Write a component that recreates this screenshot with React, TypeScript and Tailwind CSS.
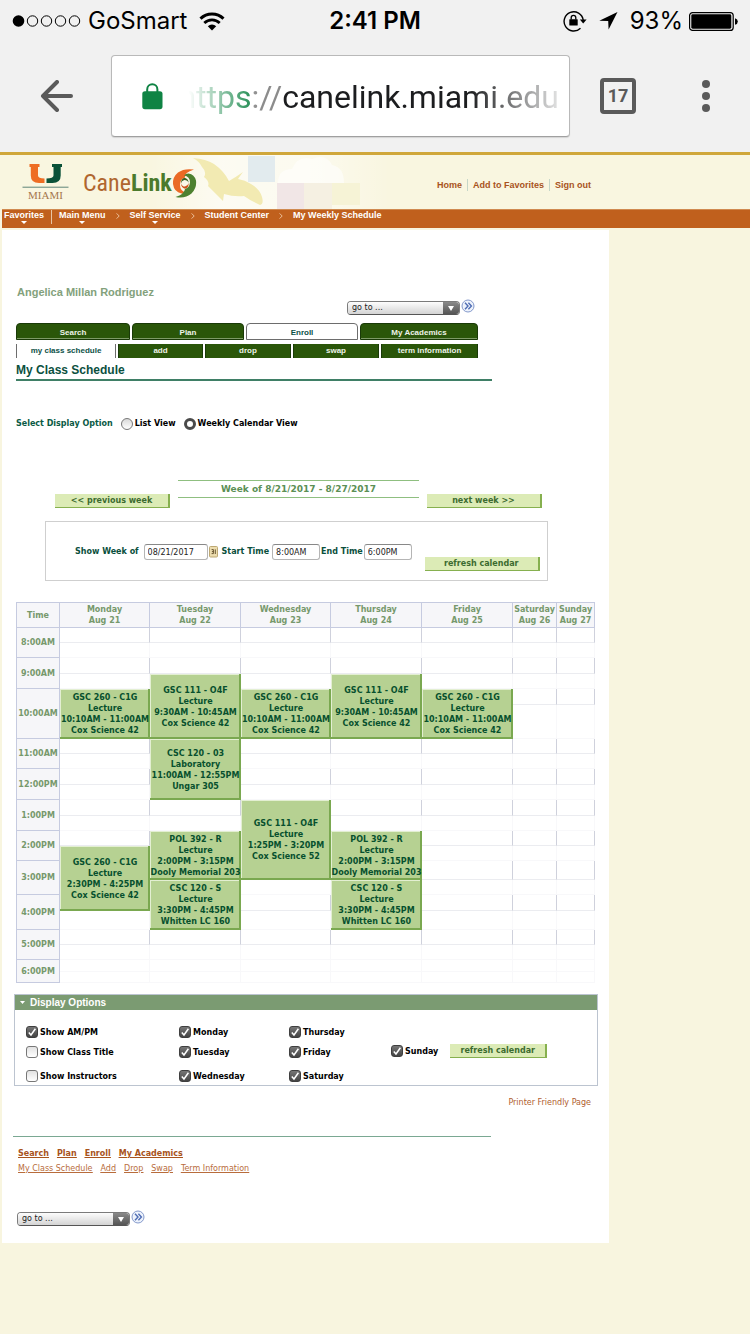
import React from "react";

const verdana = "font-['DejaVu_Sans',Verdana,sans-serif]";
const arial = "font-['Liberation_Sans',Arial,sans-serif]";

type Row = { hour?: string; h: string };

const rows: Row[] = [
  { hour: "8:00AM", h: "h-[15px]" },
  { h: "h-[15px]" },
  { hour: "9:00AM", h: "h-[16px]" },
  { h: "h-[15px]" },
  { hour: "10:00AM", h: "h-[16px]" },
  { h: "h-[34px]" },
  { hour: "11:00AM", h: "h-[15px]" },
  { h: "h-[15px]" },
  { hour: "12:00PM", h: "h-[16px]" },
  { h: "h-[15px]" },
  { hour: "1:00PM", h: "h-[16px]" },
  { h: "h-[15px]" },
  { hour: "2:00PM", h: "h-[15px]" },
  { h: "h-[15px]" },
  { hour: "3:00PM", h: "h-[19px]" },
  { h: "h-[15px]" },
  { hour: "4:00PM", h: "h-[16px]" },
  { h: "h-[19px]" },
  { hour: "5:00PM", h: "h-[15px]" },
  { h: "h-[15px]" },
  { hour: "6:00PM", h: "h-[12px]" },
  { h: "h-[11px]" },
];

const days = [
  ["Monday", "Aug 21"],
  ["Tuesday", "Aug 22"],
  ["Wednesday", "Aug 23"],
  ["Thursday", "Aug 24"],
  ["Friday", "Aug 25"],
  ["Saturday", "Aug 26"],
  ["Sunday", "Aug 27"],
];

type Meeting = { day: number; start: number; span: number; lines: string[] };

const meetings: Meeting[] = [
  { day: 0, start: 4, span: 2, lines: ["GSC 260 - C1G", "Lecture", "10:10AM - 11:00AM", "Cox Science 42"] },
  { day: 0, start: 13, span: 4, lines: ["GSC 260 - C1G", "Lecture", "2:30PM - 4:25PM", "Cox Science 42"] },
  { day: 1, start: 3, span: 3, lines: ["GSC 111 - O4F", "Lecture", "9:30AM - 10:45AM", "Cox Science 42"] },
  { day: 1, start: 6, span: 4, lines: ["CSC 120 - 03", "Laboratory", "11:00AM - 12:55PM", "Ungar 305"] },
  { day: 1, start: 12, span: 3, lines: ["POL 392 - R", "Lecture", "2:00PM - 3:15PM", "Dooly Memorial 203"] },
  { day: 1, start: 15, span: 3, lines: ["CSC 120 - S", "Lecture", "3:30PM - 4:45PM", "Whitten LC 160"] },
  { day: 2, start: 4, span: 2, lines: ["GSC 260 - C1G", "Lecture", "10:10AM - 11:00AM", "Cox Science 42"] },
  { day: 2, start: 10, span: 5, lines: ["GSC 111 - O4F", "Lecture", "1:25PM - 3:20PM", "Cox Science 52"] },
  { day: 3, start: 3, span: 3, lines: ["GSC 111 - O4F", "Lecture", "9:30AM - 10:45AM", "Cox Science 42"] },
  { day: 3, start: 12, span: 3, lines: ["POL 392 - R", "Lecture", "2:00PM - 3:15PM", "Dooly Memorial 203"] },
  { day: 3, start: 15, span: 3, lines: ["CSC 120 - S", "Lecture", "3:30PM - 4:45PM", "Whitten LC 160"] },
  { day: 4, start: 4, span: 2, lines: ["GSC 260 - C1G", "Lecture", "10:10AM - 11:00AM", "Cox Science 42"] },
];

function StatusBar() {
  return (
    <div className="grid h-10 grid-cols-[1fr_auto_1fr] items-center pl-3 pr-3 pt-0.5 font-['Inter',sans-serif] text-2xl text-black">
      <div className="flex items-center">
        <svg width="70" height="14" viewBox="0 0 70 14" aria-hidden="true">
          <circle cx="6.5" cy="7" r="5.8" />
          {[20.5, 34.5, 48.5, 62.5].map((x) => (
            <circle key={x} cx={x} cy="7" r="5.2" fill="none" stroke="#000" strokeWidth="1" />
          ))}
        </svg>
        <span className="ml-1.5">GoSmart</span>
        <svg className="ml-3" width="26" height="19" viewBox="0 0 26 19" aria-hidden="true">
          <path d="M1.5 6.7 A16.5 16.5 0 0 1 24.5 6.7" fill="none" stroke="#000" strokeWidth="3" />
          <path d="M5.3 11 A11 11 0 0 1 20.7 11" fill="none" stroke="#000" strokeWidth="2.8" />
          <path d="M13 18.5 L8.8 14.2 A6.2 6.2 0 0 1 17.2 14.2 Z" />
        </svg>
      </div>
      <div className="font-semibold">2:41 PM</div>
      <div className="flex items-center justify-end">
        <svg width="24" height="22" viewBox="0 0 24 22" aria-hidden="true">
          <path d="M17.5 18.2 A9.6 9.6 0 1 1 20.2 10" fill="none" stroke="#000" strokeWidth="1.4" />
          <path d="M16.8 9.6 H23.6 L20.2 13.4 Z" />
          <rect x="6.3" y="9.2" width="8.4" height="6.4" rx="0.6" />
          <path d="M8.2 9.5 V7.6 A2.3 2.3 0 0 1 12.8 7.6 V9.5" fill="none" stroke="#000" strokeWidth="1.3" />
        </svg>
        <svg className="ml-3" width="19" height="18" viewBox="0 0 19 18" aria-hidden="true">
          <path d="M18.5 0 L9.6 17.6 L9.2 9.1 L0.3 8.8 Z" />
        </svg>
        <span className="ml-3">93%</span>
        <svg className="ml-1.5" width="49" height="19" viewBox="0 0 49 19" aria-hidden="true">
          <rect x="0.6" y="0.6" width="43.6" height="17.8" rx="3" fill="none" stroke="#000" strokeWidth="1.2" />
          <rect x="2.3" y="2.3" width="40" height="14.4" rx="1.4" />
          <path d="M46 6.2 Q48.8 7 48.8 9.5 Q48.8 12 46 12.8 Z" />
        </svg>
      </div>
    </div>
  );
}

function BrowserBar() {
  return (
    <div className="flex items-center pb-[15px] pl-10 pr-10 pt-[15px]">
      <button type="button" aria-label="Back" className="shrink-0">
        <svg width="33" height="32" viewBox="0 0 33 32" fill="none" stroke="#5a5a5a" strokeWidth="4" strokeLinecap="round" strokeLinejoin="round">
          <path d="M31 16 H3 M17 2 L3 16 L17 30" />
        </svg>
      </button>
      <button
        type="button"
        className="ml-[38px] flex h-[82px] min-w-0 flex-1 items-center rounded border border-[#b9b9b9] border-b-[#a0a0a0] bg-white pl-[30px] pr-[10px] shadow-[0_1px_1px_rgba(0,0,0,0.12)]"
      >
        <svg className="shrink-0" width="21" height="27" viewBox="0 0 21 27" aria-hidden="true">
          <rect x="0.3" y="8.2" width="20.2" height="18" rx="2.6" fill="#0f8344" />
          <path d="M5.2 9 V6.4 A5.1 5.1 0 0 1 15.4 6.4 V9" fill="none" stroke="#0f8344" strokeWidth="2" />
        </svg>
        <span className="ml-1.5 flex min-w-0 flex-1 justify-end whitespace-nowrap pt-0.5 font-['Roboto',sans-serif] text-[32px] leading-[44px] text-[#1c1d1f] [mask-image:linear-gradient(to_right,transparent_5%,black_23%,black_77%,rgba(0,0,0,0.12))]">
          <span>
            <span className="text-[#0f8344]">https</span>
            <span className="text-[#8c8c8c]">://</span>canelink.miami.edu
          </span>
        </span>
      </button>
      <button
        type="button"
        aria-label="17 open tabs"
        className="ml-[30px] flex h-9 w-9 shrink-0 items-center justify-center rounded border-4 border-[#5a5a5a] font-['Roboto',sans-serif] text-lg font-bold text-[#5a5a5a]"
      >
        17
      </button>
      <button type="button" aria-label="Menu" className="ml-[66px] flex shrink-0 flex-col gap-1">
        <span className="h-2 w-2 rounded-full bg-[#5a5a5a]" />
        <span className="h-2 w-2 rounded-full bg-[#5a5a5a]" />
        <span className="h-2 w-2 rounded-full bg-[#5a5a5a]" />
      </button>
    </div>
  );
}

function HeaderArt() {
  return (
    <svg className="absolute left-[150px] top-0" width="240" height="54" viewBox="0 0 240 54" aria-hidden="true">
      <defs>
        <linearGradient id="sky" x1="0" x2="1">
          <stop offset="0" stopColor="#fff" stopOpacity="0" />
          <stop offset="0.3" stopColor="#fff" stopOpacity="0.6" />
          <stop offset="0.65" stopColor="#fff" stopOpacity="0.5" />
          <stop offset="1" stopColor="#fff" stopOpacity="0" />
        </linearGradient>
      </defs>
      <rect width="240" height="54" fill="url(#sky)" />
      <rect x="98" y="1" width="27" height="26" fill="#e2ebee" />
      <rect x="127" y="28" width="27" height="26" fill="#f1e6e6" />
      <rect x="154" y="28" width="28" height="26" fill="#f5f0e2" />
      <rect x="182" y="28" width="28" height="22" fill="#f6f3d6" />
      <path d="M128 28 Q128 14 142 14 Q148 0 162 4 Q176 -2 182 10 Q194 12 194 28 Z" fill="#fff" fillOpacity="0.55" />
      <path d="M43 3 Q56 4 64 9 Q74 16 79 26 Q86 22 93 17 Q90 21 88 24 Q95 25 101 29 Q110 34 112 42 Q114 49 110 50 Q101 46 94 41 Q84 42 74 39 L73 46 Q65 38 58 31 Q60 27 54 22 Q57 17 52 12 Q49 6 43 3 Z" fill="#f2eab2" />
    </svg>
  );
}

function Header() {
  return (
    <header className={`relative border-t-[3px] border-[#d0a73a] bg-[#f9f6e0] ${arial}`}>
      <HeaderArt />
      <div className="relative flex h-[54px] items-start pl-[22px]">
        <a href="#miami" className="flex w-[47px] flex-col items-center pt-[9px]">
          <svg width="47" height="24" viewBox="0 0 47 24" aria-hidden="true">
            <path d="M7.5 0 H17.5 V3 H16 V11.5 Q16 14.5 22.5 14.5 V19 H17 Q8.8 19 8.8 11.5 V3 H7.5 Z" fill="#ee6d23" />
            <path d="M40 0 H30 V3 H31.5 V11.5 Q31.5 14.5 24.5 14.5 V19 H30.5 Q38.7 19 38.7 11.5 V3 H40 Z" fill="#0b5238" />
            <path d="M0.5 23.2 H46.5" stroke="#5f8577" strokeWidth="1" />
          </svg>
          <span className="font-['Liberation_Serif',serif] text-[11px] leading-[14px] text-[#a5764d]">MIAMI</span>
        </a>
        <a href="#canelink" className="ml-[14px] flex items-center pt-[12px] font-['Roboto_Condensed','Liberation_Sans_Narrow','Roboto',sans-serif] leading-[32px]">
          <span className="text-2xl text-[#b0662f]">Cane</span>
          <span className="text-2xl font-bold text-[#4b7a2c]">Link</span>
          <svg width="25" height="30" viewBox="0 0 25 30" aria-hidden="true">
            <path d="M22 1.5 Q12 0 6 4.5 Q0.5 9 1 16 Q2 24 9.5 25.5 Q12 26 14 24.5 Q8 23 8 17 Q8 11 13 9.5 Q12 4.5 22 1.5 Z" fill="#ea6a26" />
            <path d="M3.5 29 Q13 31 19.5 25.5 Q25 20 24 12.5 Q22.5 6.5 16.5 5.5 Q13.5 5.5 12 7.5 Q18 8.5 18 14.5 Q17.5 19.5 13 21 Q12.5 26 3.5 29 Z" fill="#4d8130" />
            <path d="M12.5 9.8 Q16.6 10.6 16.6 15 Q15.8 12 12.3 12 Q9.4 12.6 9 15.5 Q8.8 11 12.5 9.8 Z" fill="#3a6424" />
            <path d="M13 20.8 Q9 19.6 9 15.5 Q10 18.6 13 18.6 Q16 18 16.6 15 Q17 19.4 13 20.8 Z" fill="#cf541c" />
          </svg>
        </a>
        <nav className="absolute left-[437px] top-[24px] flex items-center gap-[5px] whitespace-nowrap text-[9px] font-bold leading-[12px] text-[#a8531c]">
          <a href="#home">Home</a>
          <span className="h-3 w-px bg-[#c5d6c8]" />
          <a href="#add-favorite">Add to Favorites</a>
          <span className="h-3 w-px bg-[#c5d6c8]" />
          <a href="#signout">Sign out</a>
        </nav>
      </div>
    </header>
  );
}

function Crumb({ label, menu }: { label: string; menu?: boolean }) {
  return (
    <a href="#crumb" className="flex flex-col items-center">
      {label}
      {menu && (
        <svg width="6" height="3" viewBox="0 0 6 3" aria-hidden="true">
          <path d="M0 0 H6 L3 3 Z" fill="#fff" />
        </svg>
      )}
    </a>
  );
}

function CrumbArrow() {
  return (
    <svg className="mt-[3px]" width="4" height="6" viewBox="0 0 4 6" aria-hidden="true">
      <path d="M0.6 0.4 L3.2 3 L0.6 5.6" fill="none" stroke="#f0c9a8" strokeWidth="0.9" />
    </svg>
  );
}

function NavBar() {
  return (
    <nav
      className={`ml-0.5 flex h-[19px] items-start gap-[10px] whitespace-nowrap border-t border-[#d08a50] bg-[#c0601d] pl-0.5 text-[9px] font-bold leading-[11px] text-white ${arial}`}
    >
      <div className="flex gap-[7px]">
        <Crumb label="Favorites" menu />
        <span className="h-[14px] w-px bg-[#e8c5a5]" />
        <Crumb label="Main Menu" menu />
      </div>
      <CrumbArrow />
      <Crumb label="Self Service" menu />
      <CrumbArrow />
      <Crumb label="Student Center" />
      <CrumbArrow />
      <Crumb label="My Weekly Schedule" />
    </nav>
  );
}

function GoTo({ id }: { id: string }) {
  return (
    <div className="flex items-start gap-px">
      <div className="relative mt-0.5 h-[14px] w-[113px] overflow-hidden rounded border border-[#7b7b7b] border-b-[#555]">
        <select
          id={id}
          aria-label="Go to"
          className={`block h-full w-full appearance-none bg-linear-to-b from-[#fdfdfd] to-[#d4d4d4] pl-1 text-[8px] leading-[12px] text-[#222] ${verdana}`}
        >
          <option>go to ...</option>
        </select>
        <span className="pointer-events-none absolute inset-y-0 right-0 flex w-4 items-center justify-center bg-linear-to-b from-[#8a8a8a] to-[#555]">
          <svg width="6" height="5" viewBox="0 0 6 5" aria-hidden="true">
            <path d="M0 0 H6 L3 5 Z" fill="#fff" />
          </svg>
        </span>
      </div>
      <button type="button" aria-label="Go">
        <svg width="14" height="14" viewBox="0 0 14 14" fill="none">
          <circle cx="7" cy="7" r="6" fill="#eef3fc" stroke="#8499cb" strokeWidth="1" />
          <path d="M4 3.8 L7 7 L4 10.2 M7.4 3.8 L10.4 7 L7.4 10.2" stroke="#4f6db4" strokeWidth="1.4" />
        </svg>
      </button>
    </div>
  );
}

const mainTabs = [
  { label: "Search", w: "w-[114px]" },
  { label: "Plan", w: "w-[112px]" },
  { label: "Enroll", w: "w-[112px]", active: true },
  { label: "My Academics", w: "w-[118px]" },
];

const subTabs = [
  { label: "my class schedule", w: "w-[100px]", active: true },
  { label: "add", w: "w-[85px]" },
  { label: "drop", w: "w-[86px]" },
  { label: "swap", w: "w-[86px]" },
  { label: "term information", w: "w-[97px]" },
];

function Tabs() {
  return (
    <div className={`ml-[14px] text-[8px] font-bold ${arial}`}>
      <div className="mt-2 flex gap-0.5">
        {mainTabs.map((t) => (
          <a
            key={t.label}
            href="#tab"
            className={`flex h-[17px] items-center justify-center rounded-t border pt-0.5 ${t.w} ${
              t.active
                ? "border-[#6d6d6d] bg-white text-[#0d5147]"
                : "border-[#1a3a08] bg-[#2a5609] text-[#eef3e8] shadow-[inset_0_-2px_0_-1px_#7d9a66]"
            }`}
          >
            {t.label}
          </a>
        ))}
      </div>
      <div className="mt-1 flex gap-0.5">
        {subTabs.map((t) => (
          <a
            key={t.label}
            href="#subtab"
            className={`flex h-[14px] items-center justify-center border-x ${t.w} ${
              t.active ? "border-[#6d6d6d] bg-white text-[#0d5147]" : "border-[#1a3a08] bg-[#2a5609] text-[#eef3e8]"
            }`}
          >
            {t.label}
          </a>
        ))}
      </div>
    </div>
  );
}

function Radio({ id, label, checked }: { id: string; label: string; checked?: boolean }) {
  return (
    <label htmlFor={id} className="flex items-center gap-0.5">
      <input
        id={id}
        type="radio"
        name="display"
        defaultChecked={checked}
        className="h-3 w-3 appearance-none rounded-full border border-[#777] bg-linear-to-b from-[#d9d9d9] to-white checked:border-[3px] checked:border-[#4a4a4a] checked:from-white"
      />
      {label}
    </label>
  );
}

function GreenButton({ children, w }: { children: React.ReactNode; w: string }) {
  return (
    <button
      type="button"
      className={`h-[14px] whitespace-nowrap border-b border-r-2 border-[#86b04f] bg-[#dcebb6] text-[8px] font-bold leading-[13px] text-[#3c6b30] ${w}`}
    >
      {children}
    </button>
  );
}

const field =
  "h-4 rounded-[3px] border border-[#b5b5b5] border-t-[#888] bg-white pl-[3px] text-[8px] font-normal text-[#222]";

function Filter() {
  return (
    <form className="ml-[43px] mt-[13px] flex h-[60px] w-[503px] items-center border border-[#cfcfcf] pl-[29px] pt-0.5 text-[8px] font-bold text-[#0a4f3c]">
      <label htmlFor="week" className="whitespace-nowrap">Show Week of</label>
      <input id="week" defaultValue="08/21/2017" className={`${field} ml-[5px] w-16`} />
      <svg className="ml-px shrink-0" width="10" height="12" viewBox="0 0 10 12" aria-hidden="true">
        <rect x="0.5" y="0.5" width="8" height="10.5" rx="1" fill="#ecdcae" stroke="#bda873" />
        <path d="M2.6 3.6 H4.4 V7.6 H2.6 M2.9 5.6 H4.4 M6.3 3.4 V8" fill="none" stroke="#5b4824" strokeWidth="0.9" />
      </svg>
      <label htmlFor="start" className="ml-[3px] whitespace-nowrap">Start Time</label>
      <input id="start" defaultValue="8:00AM" className={`${field} ml-[3px] w-12`} />
      <label htmlFor="end" className="ml-px whitespace-nowrap">End Time</label>
      <input id="end" defaultValue="6:00PM" className={`${field} ml-px w-12`} />
      <div className="ml-[13px] pt-[23px]">
        <GreenButton w="w-[115px]">refresh calendar</GreenButton>
      </div>
    </form>
  );
}

function Calendar() {
  return (
    <div className="ml-[14px] mr-[14px] mt-[21px]">
      <table className="w-full table-fixed border-separate border-spacing-0 border-l border-t border-[#c6cbe0] text-center text-[8px] font-bold leading-[11px]">
        <colgroup>
          <col className="w-[43px]" />
          <col className="w-[90px]" />
          <col className="w-[91px]" />
          <col className="w-[90px]" />
          <col className="w-[91px]" />
          <col className="w-[91px]" />
          <col className="w-[44px]" />
          <col className="w-[38px]" />
        </colgroup>
        <thead>
          <tr className="h-[25px]">
            <th className="border-b border-r border-[#c6cbe0] bg-[#f6f6f9] p-0 text-[#76996c]">Time</th>
            {days.map(([d, date]) => (
              <th key={d} className="border-b border-r border-[#c6cbe0] bg-[#f6f6f9] p-0 text-[#76996c]">
                {d}
                <br />
                {date}
              </th>
            ))}
          </tr>
        </thead>
        <tbody>
          {rows.map((row, r) => (
            <tr key={r} className={row.h}>
              {row.hour && (
                <th rowSpan={2} className="border-b border-r border-[#c6cbe0] bg-[#f6f6f9] p-0 text-[#76996c]">
                  {row.hour}
                </th>
              )}
              {days.map((_, d) => {
                const meeting = meetings.find((m) => m.day === d && r >= m.start && r < m.start + m.span);
                if (meeting && meeting.start !== r) return null;
                if (meeting) {
                  return (
                    <td
                      key={d}
                      rowSpan={meeting.span}
                      className="whitespace-nowrap bg-[#b6d192] p-0 text-[#07502e] shadow-[inset_-2px_-2px_0_#7aa850,inset_1px_1px_0_#e3efd2]"
                    >
                      {meeting.lines.map((line) => (
                        <div key={line}>{line}</div>
                      ))}
                    </td>
                  );
                }
                return (
                  <td
                    key={d}
                    className={
                      row.hour && r < 20
                        ? "border-b border-r border-b-[#ebecf0] border-r-[#cfd1dc] p-0"
                        : "border-b border-r border-[#f8f8fa] p-0"
                    }
                  />
                );
              })}
            </tr>
          ))}
        </tbody>
      </table>
    </div>
  );
}

function Check({ label, checked }: { label: string; checked?: boolean }) {
  const id = label.toLowerCase().replace(/[^a-z]/g, "-");
  return (
    <label htmlFor={id} className="relative flex items-end gap-0.5 leading-[10px]">
      <input
        id={id}
        type="checkbox"
        defaultChecked={checked}
        className="peer h-3 w-3 appearance-none rounded-[3px] border border-[#777] bg-linear-to-b from-[#e2e2e2] to-white checked:border-[#3f3f3f] checked:from-[#777] checked:to-[#444]"
      />
      <svg className="pointer-events-none absolute left-0 top-0 hidden peer-checked:block" width="12" height="12" viewBox="0 0 12 12" aria-hidden="true">
        <path d="M2.8 6.4 L5 9 L9.4 2.8" fill="none" stroke="#fff" strokeWidth="1.5" />
      </svg>
      {label}
    </label>
  );
}

function DisplayOptions() {
  const column = "grid grid-rows-[20px_24px_16px] items-start whitespace-nowrap";
  return (
    <section className="ml-3 mr-[11px] mt-[11px] border border-[#bcc4d0]">
      <h2 className={`flex h-[15px] items-center gap-[5px] bg-[#7b9b72] pl-[5px] text-[10px] font-bold text-white ${arial}`}>
        <svg width="5" height="3" viewBox="0 0 5 3" aria-hidden="true">
          <path d="M0 0 H5 L2.5 3 Z" fill="#fff" />
        </svg>
        Display Options
      </h2>
      <div className="flex h-[75px] items-start pl-[11px] pt-4 text-[8px] font-bold text-black">
        <div className={`${column} w-[153px]`}>
          <Check label="Show AM/PM" checked />
          <Check label="Show Class Title" />
          <Check label="Show Instructors" />
        </div>
        <div className={`${column} w-[110px]`}>
          <Check label="Monday" checked />
          <Check label="Tuesday" checked />
          <Check label="Wednesday" checked />
        </div>
        <div className={`${column} w-[102px]`}>
          <Check label="Thursday" checked />
          <Check label="Friday" checked />
          <Check label="Saturday" checked />
        </div>
        <div className="flex items-center gap-3 pt-[18px]">
          <Check label="Sunday" checked />
          <GreenButton w="w-[97px]">refresh calendar</GreenButton>
        </div>
      </div>
    </section>
  );
}

function FooterLinks() {
  return (
    <>
      <div className="mr-[18px] mt-[11px] text-right text-[8px] leading-[12px] text-[#b0602f]">
        <a href="#print">Printer Friendly Page</a>
      </div>
      <hr className="ml-[11px] mt-[27px] h-0 w-[478px] max-w-full border-0 border-t border-solid border-t-[#7aa892]" />
      <nav className="ml-4 mt-[11px] flex gap-2 text-[8px] font-bold leading-[12px] text-[#a8531c] underline">
        <a href="#search">Search</a>
        <a href="#plan">Plan</a>
        <a href="#enroll">Enroll</a>
        <a href="#academics">My Academics</a>
      </nav>
      <nav className="ml-4 mt-[3px] flex gap-2 text-[8px] leading-[12px] text-[#b86c3c] underline">
        <a href="#schedule">My Class Schedule</a>
        <a href="#add">Add</a>
        <a href="#drop">Drop</a>
        <a href="#swap">Swap</a>
        <a href="#term">Term Information</a>
      </nav>
    </>
  );
}

export default function App() {
  return (
    <div className="min-h-screen bg-[#f8f5df]">
      <div className="bg-[#f1f1f1]">
        <StatusBar />
        <BrowserBar />
      </div>
      <Header />
      <NavBar />
      <main className={`ml-0.5 mt-0.5 w-full max-w-[607px] bg-white pb-[17px] pt-[55px] ${verdana}`}>
        <div className={`ml-[15px] text-[11px] font-bold leading-[14px] text-[#83a17c] ${arial}`}>
          Angelica Millan Rodriguez
        </div>
        <div className="ml-[345px] h-4">
          <GoTo id="goto-top" />
        </div>
        <Tabs />
        <h1
          className={`ml-[14px] mt-1 w-[476px] max-w-full border-b-2 border-[#3f7f66] pb-px text-xs font-bold leading-[16px] text-[#0b5040] ${arial}`}
        >
          My Class Schedule
        </h1>
        <div className="ml-[14px] mt-9 flex h-[14px] items-center gap-2 whitespace-nowrap text-[8px] font-bold">
          <span className="text-[#0a5a45]">Select Display Option</span>
          <Radio id="list" label="List View" />
          <Radio id="weekly" label="Weekly Calendar View" checked />
        </div>
        <div className="ml-[53px] mt-[49px] flex items-end gap-2">
          <GreenButton w="w-[115px]">&lt;&lt; previous week</GreenButton>
          <div className="mb-[10px] h-[18px] w-[241px] border-y border-[#8fbf80] text-center text-[9px] font-bold leading-[16px] text-[#5b8f55]">
            Week of 8/21/2017 - 8/27/2017
          </div>
          <GreenButton w="w-[115px]">next week &gt;&gt;</GreenButton>
        </div>
        <Filter />
        <Calendar />
        <DisplayOptions />
        <FooterLinks />
        <div className="ml-[15px] mt-[35px]">
          <GoTo id="goto-bottom" />
        </div>
      </main>
    </div>
  );
}
